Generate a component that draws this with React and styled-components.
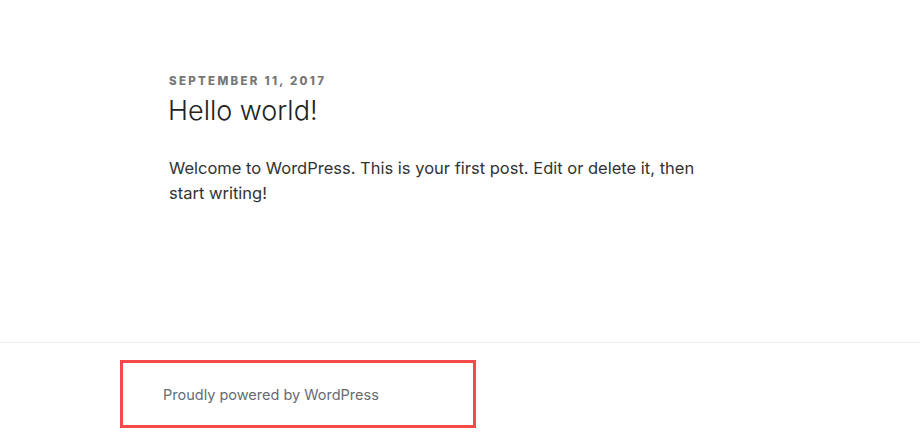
import React from 'react';
import styled, { createGlobalStyle } from 'styled-components';

const GlobalStyle = createGlobalStyle`
  body {
    margin: 0;
    background: #fff;
    font-family: Inter, "Open Sans", "Liberation Sans", sans-serif;
  }
`;

const Page = styled.div`
  width: 920px;
  height: 435px;
  overflow: hidden;
  background: #fff;
`;

const Main = styled.main`
  height: 342px;
  box-sizing: border-box;
  padding: 73px 0 0 169px;
`;

const PostDate = styled.div`
  font-size: 11.5px;
  font-weight: 800;
  letter-spacing: 0.2em;
  text-transform: uppercase;
  color: #767676;
  line-height: 16px;
  margin-bottom: 4px;
`;

const PostTitle = styled.h1`
  margin: 0 0 0 -1px;
  font-size: 27px;
  font-weight: 300;
  color: #222;
  line-height: 35px;
`;

const PostBody = styled.p`
  margin: 28px 0 0;
  width: 545px;
  font-size: 16.5px;
  line-height: 25px;
  color: #333;
`;

const Footer = styled.footer`
  border-top: 1px solid #eee;
  padding: 17px 0 0 120px;
`;

const FooterBox = styled.div`
  width: 356px;
  height: 68px;
  box-sizing: border-box;
  border: 3px solid #f44a4a;
  display: flex;
  align-items: center;
  padding-left: 40px;
  font-size: 14.5px;
  color: #666b72;
`;

const App = () => {
  return (
    <Page>
      <GlobalStyle />
      <Main>
        <PostDate>September 11, 2017</PostDate>
        <PostTitle>Hello world!</PostTitle>
        <PostBody>
          Welcome to WordPress. This is your first post. Edit or delete it, then start writing!
        </PostBody>
      </Main>
      <Footer>
        <FooterBox>Proudly powered by WordPress</FooterBox>
      </Footer>
    </Page>
  );
};

export default App;
